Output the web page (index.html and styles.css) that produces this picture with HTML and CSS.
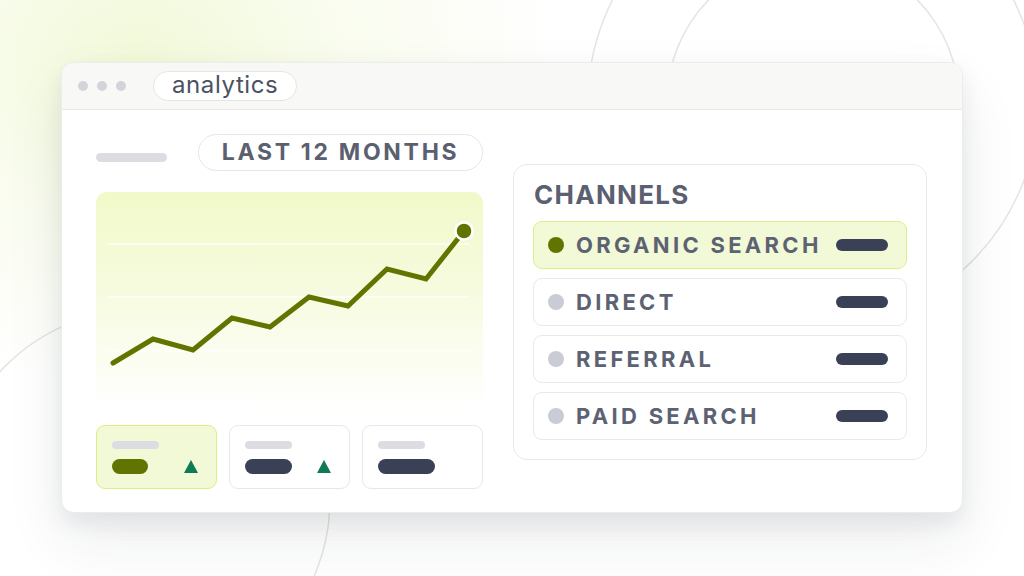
FILE: index.html
```html
<!DOCTYPE html>
<html lang="en">
<head>
<meta charset="utf-8">
<title>analytics</title>
<link rel="stylesheet" href="styles.css">
</head>
<body>
<svg class="bg-rings" width="1024" height="576" viewBox="0 0 1024 576" aria-hidden="true">
  <circle cx="813" cy="102" r="225" />
  <circle cx="813" cy="102" r="146" />
  <circle cx="140" cy="500" r="190" />
</svg>
<div class="window">
  <div class="titlebar">
    <div class="dots"><span></span><span></span><span></span></div>
    <div class="url">analytics</div>
  </div>
  <div class="content">
    <div class="left">
      <div class="head">
        <span class="head-bar"></span>
        <span class="range">LAST 12 MONTHS</span>
      </div>
      <div class="chart">
        <svg width="387" height="218" viewBox="0 0 387 218">
          <g class="grid">
            <line x1="12" y1="52" x2="374" y2="52" />
            <line x1="12" y1="105" x2="374" y2="105" />
            <line x1="12" y1="159" x2="374" y2="159" />
          </g>
          <polyline class="trend" points="17,171 57,147 97,158 136,126 174,135 213,105 252,114 291,77 330,87 368,39" />
          <circle class="end" cx="368" cy="39" r="8.5" />
        </svg>
      </div>
      <div class="cards">
        <div class="card active">
          <span class="card-label"></span>
          <div class="card-row"><span class="card-val olive w36"></span><span class="tri"></span></div>
        </div>
        <div class="card">
          <span class="card-label"></span>
          <div class="card-row"><span class="card-val w47"></span><span class="tri"></span></div>
        </div>
        <div class="card">
          <span class="card-label"></span>
          <div class="card-row"><span class="card-val w57"></span></div>
        </div>
      </div>
    </div>
    <div class="panel">
      <div class="panel-title">CHANNELS</div>
      <div class="rows">
        <div class="row active"><span class="dot"></span><span class="name">ORGANIC SEARCH</span><span class="val"></span></div>
        <div class="row"><span class="dot"></span><span class="name">DIRECT</span><span class="val"></span></div>
        <div class="row"><span class="dot"></span><span class="name">REFERRAL</span><span class="val"></span></div>
        <div class="row"><span class="dot"></span><span class="name">PAID SEARCH</span><span class="val"></span></div>
      </div>
    </div>
  </div>
</div>
</body>
</html>
```

FILE: styles.css
```css
* { box-sizing: border-box; }
html, body { margin: 0; }
body {
  width: 1024px;
  height: 576px;
  overflow: hidden;
  position: relative;
  padding: 62px 0 0 61px;
  font-family: Inter, "Liberation Sans", sans-serif;
  background:
    radial-gradient(ellipse 420px 330px at 140px 60px, #f2f9d9 0%, rgba(246,251,230,0.7) 45%, rgba(255,255,255,0) 100%),
    #ffffff;
}
.bg-rings {
  position: absolute;
  left: 0;
  top: 0;
  z-index: 0;
}
.bg-rings circle {
  fill: none;
  stroke: #e4e4e0;
  stroke-width: 1.5;
}
.window {
  position: relative;
  z-index: 1;
  width: 902px;
  height: 451px;
  background: #ffffff;
  border: 1px solid #ececea;
  border-radius: 13px;
  box-shadow: 0 10px 22px rgba(30, 35, 55, 0.08), 0 28px 60px rgba(30, 35, 55, 0.08);
  overflow: hidden;
}
.titlebar {
  height: 47px;
  background: #f8f8f6;
  border-bottom: 1.5px solid #e9e9e6;
  display: flex;
  align-items: center;
  padding-left: 16px;
}
.dots { display: flex; gap: 9px; }
.dots span {
  width: 10px;
  height: 10px;
  border-radius: 50%;
  background: #d2d4da;
}
.url {
  margin-left: 27px;
  height: 30px;
  padding: 0 18px;
  border: 1.5px solid #e5e5e1;
  border-radius: 15px;
  background: #ffffff;
  font-size: 24px;
  line-height: 26px;
  color: #4d5262;
  letter-spacing: 0.6px;
}
.content {
  display: flex;
  align-items: center;
  gap: 30px;
  padding: 24px 35px 0 34px;
}
.left { width: 387px; }
.head {
  display: flex;
  align-items: center;
  height: 37px;
}
.head-bar {
  width: 71px;
  height: 9px;
  border-radius: 5px;
  background: #dcdde2;
  margin-top: 9px;
}
.range {
  margin-left: 31px;
  height: 37px;
  width: 285px;
  border: 1.5px solid #e5e5e1;
  border-radius: 19px;
  text-align: center;
  font-size: 23px;
  font-weight: 700;
  line-height: 34px;
  letter-spacing: 2.7px;
  color: #5b6071;
}
.chart {
  margin-top: 21px;
  height: 218px;
  border-radius: 11px;
  background: linear-gradient(180deg, #f1f9c9 0%, #f6fbdf 45%, #fdfef6 85%, #ffffff 100%);
}
.chart svg { display: block; }
.grid line { stroke: #ffffff; stroke-width: 1.5; opacity: 0.9; }
.trend {
  fill: none;
  stroke: #627400;
  stroke-width: 5;
  stroke-linejoin: miter;
  stroke-linecap: round;
}
.end { fill: #627400; stroke: #ffffff; stroke-width: 2.5; }
.cards {
  margin-top: 15px;
  display: grid;
  grid-template-columns: repeat(3, 1fr);
  gap: 12px;
}
.card {
  height: 64px;
  border: 1.5px solid #e8e8e6;
  border-radius: 9px;
  background: #ffffff;
  padding: 15px 18px 0 15px;
}
.card.active {
  background: #f1f9d7;
  border-color: #dcef84;
}
.card-label {
  display: block;
  width: 47px;
  height: 8px;
  border-radius: 4px;
  background: #dcdde2;
}
.card-row {
  margin-top: 10px;
  display: flex;
  align-items: center;
  justify-content: space-between;
}
.card-val {
  height: 15px;
  border-radius: 8px;
  background: #3a4157;
}
.card-val.olive { background: #627400; }
.w36 { width: 36px; }
.w47 { width: 47px; }
.w57 { width: 57px; }
.tri {
  width: 0;
  height: 0;
  border-left: 7.5px solid transparent;
  border-right: 7.5px solid transparent;
  border-bottom: 13px solid #0f7a55;
}
.panel {
  width: 414px;
  border: 1.5px solid #e9e9e5;
  border-radius: 14px;
  padding: 14px 19px 19px 19px;
}
.panel-title {
  font-size: 26px;
  font-weight: 700;
  line-height: 32px;
  letter-spacing: 1.3px;
  color: #5b6071;
  padding-left: 1px;
  margin-bottom: 10px;
}
.rows {
  display: flex;
  flex-direction: column;
  gap: 9px;
}
.row {
  height: 48px;
  border: 1.5px solid #e9e9e6;
  border-radius: 9px;
  display: flex;
  align-items: center;
  padding: 0 18px 0 14px;
}
.row.active {
  background: #f1f9d7;
  border-color: #dcef84;
}
.dot {
  width: 16px;
  height: 16px;
  border-radius: 50%;
  background: #c9ccd5;
  flex: none;
}
.row.active .dot { background: #627400; }
.name {
  margin-left: 12px;
  font-size: 22px;
  font-weight: 700;
  letter-spacing: 3.3px;
  color: #5d6273;
  line-height: 26px;
}
.val {
  margin-left: auto;
  width: 52px;
  height: 12px;
  border-radius: 6px;
  background: #3a4157;
}
```
